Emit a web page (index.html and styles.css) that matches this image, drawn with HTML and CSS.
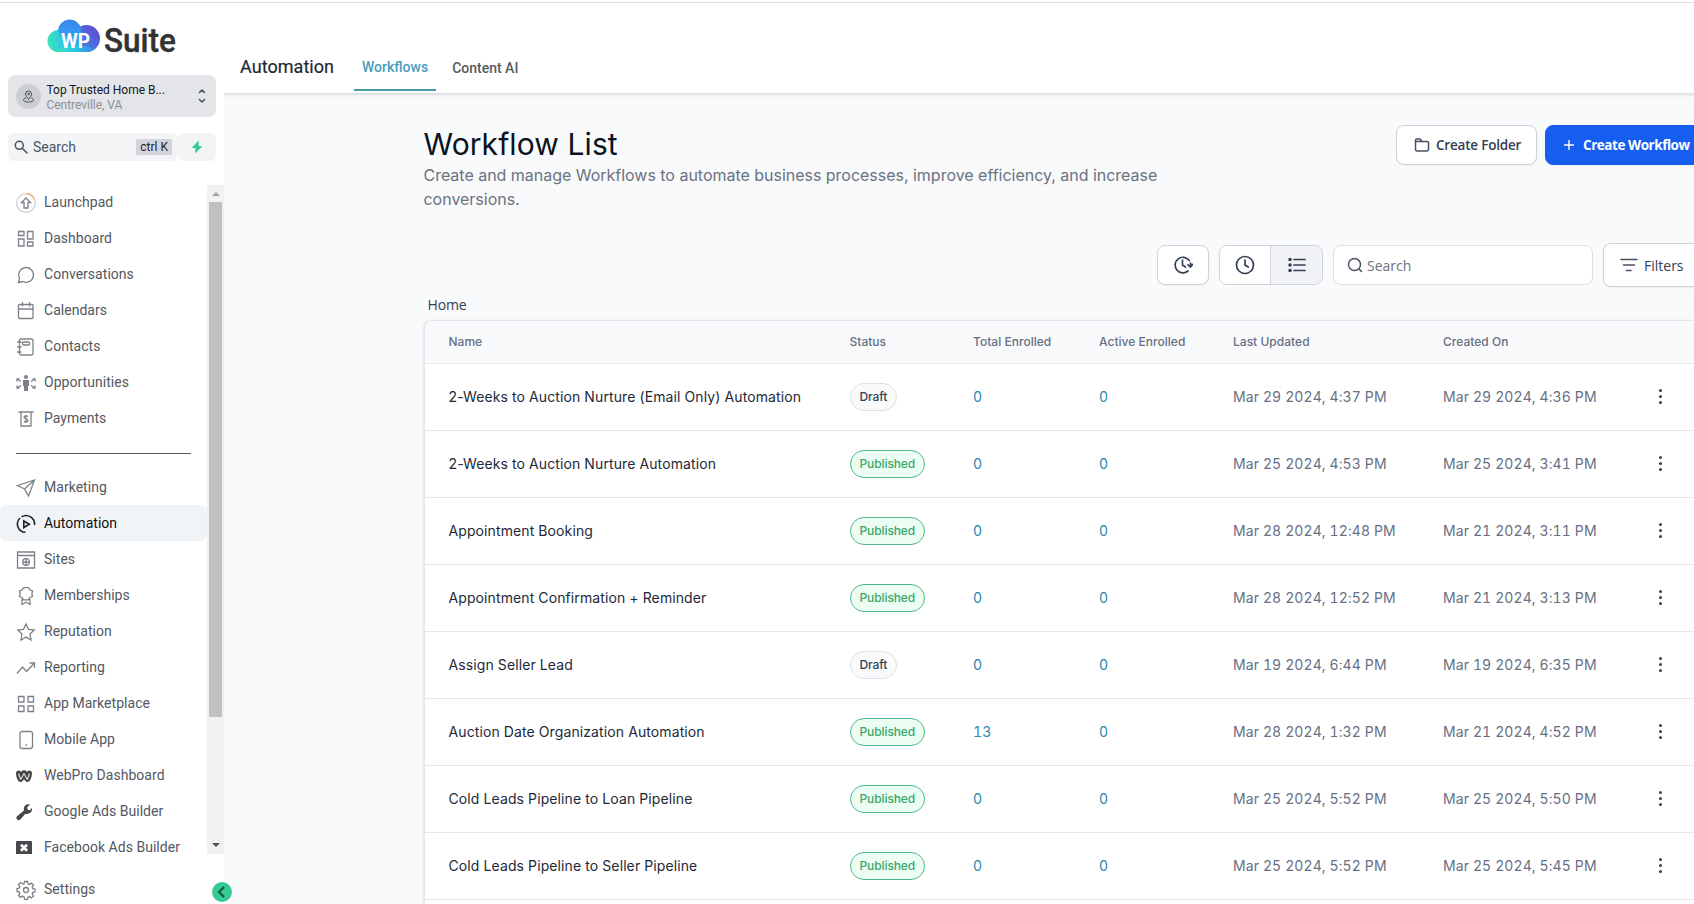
FILE: index.html
```html
<!DOCTYPE html>
<html lang="en">
<head>
<meta charset="utf-8">
<title>Automation - Workflows</title>
<link rel="stylesheet" href="styles.css">
</head>
<body>
<div class="app">
  <aside class="sidebar">
    <div class="logo">
      <svg width="150" height="50" viewBox="0 0 150 50">
        <defs>
          <linearGradient id="g1" x1="0" y1="0" x2="1" y2="0"><stop offset="0" stop-color="#3be6b4"/><stop offset=".5" stop-color="#2cc6e6"/><stop offset="1" stop-color="#3f7fe6"/></linearGradient>
          <linearGradient id="g2" x1="0" y1="0" x2="0" y2="1"><stop offset="0" stop-color="#3a86f0"/><stop offset="1" stop-color="#2cb8ea"/></linearGradient>
          <linearGradient id="g3" x1="1" y1="0" x2="0" y2="1"><stop offset="0" stop-color="#6a3fd0"/><stop offset="1" stop-color="#2f9bea"/></linearGradient>
        </defs>
        <path d="M11 35a11 11 0 1 1 5-21l16 21z" fill="url(#g1)"/>
        <circle cx="39.500" cy="21.500" r="13.500" fill="url(#g3)"/>
        <path d="M11 13a11.700 11.700 0 0 1 23-1.500c2 8 0 18.500-5 23.500H22z" fill="url(#g2)"/>
        <path d="M11 35h28a13 13 0 0 0 10-4C36 29 20 27 8 34z" fill="url(#g1)"/>
        <text x="14" y="31" textLength="29" lengthAdjust="spacingAndGlyphs" class="logo-wp">WP</text>
        <text x="57" y="35" textLength="72" lengthAdjust="spacingAndGlyphs" class="logo-suite">Suite</text>
      </svg>
    </div>
    <div class="account">
      <span class="account-pin"><svg width="13" height="13" viewBox="0 0 13 13" class="ln"><path d="M6.500 9C4.500 7 3.500 5.500 3.500 4a3 3 0 0 1 6 0c0 1.500-1 3-3 5z"/><circle cx="6.500" cy="4" r=".8"/><path d="M3.500 8C0 9 .5 12 6.500 12s6.500-3 3-4"/></svg></span>
      <div class="account-text"><div class="account-name">Top Trusted Home B...</div><div class="account-city">Centreville, VA</div></div>
      <svg width="8" height="16" viewBox="0 0 8 16" class="ln chev"><path d="M1.500 4.500L4 2l2.500 2.500M1.500 11.500L4 14l2.500-2.500"/></svg>
    </div>
    <div class="search-row">
      <div class="side-search">
        <svg width="14" height="14" viewBox="0 0 14 14" class="ln bold"><circle cx="5.300" cy="5.300" r="4"/><path d="M8.300 8.300l4.700 4.700"/></svg>
        <span>Search</span><kbd>ctrl K</kbd>
      </div>
      <div class="bolt"><svg width="12" height="14" viewBox="0 0 12 14"><path d="M8 .5L.8 7.500l3.700.8L4 13.500 11.200 6.500 7.500 5.700z" fill="#37ca93"/></svg></div>
    </div>
    <div class="nav-wrap">
      <nav class="nav">
        <a class="item"><svg class="ico" viewBox="0 0 20 20"><circle cx="10" cy="10" r="9.300" stroke="#ccd3dc"/><path d="M10 .7a9.300 9.300 0 0 1 8.500 5.500" stroke="#f0b070"/><path d="M10 5L5.500 9.500H8V15h4V9.500h2.500z"/></svg>Launchpad</a>
        <a class="item"><svg class="ico" viewBox="0 0 20 20"><path d="M2.500 2.500h5.500v4H2.500zM11.500 2.500h5.500v7.500h-5.500zM2.500 10h5.500v7H2.500zM11.500 13h5.500v4h-5.500z"/></svg>Dashboard</a>
        <a class="item"><svg class="ico" viewBox="0 0 20 20"><path d="M2.500 17.500l1-4.200a7.400 7.400 0 1 1 3.200 3.200z"/></svg>Conversations</a>
        <a class="item"><svg class="ico" viewBox="0 0 20 20"><rect x="2.500" y="3.500" width="14.500" height="14" rx="1"/><path d="M2.500 8h15M6.500 1v4.500M13.500 1v4.500"/></svg>Calendars</a>
        <a class="item"><svg class="ico" viewBox="0 0 20 20"><rect x="3.500" y="2" width="13.500" height="16" rx="1.500"/><path d="M1 5h4.500M1 10h4.500M1 15h4.500"/><rect x="6.500" y="5" width="7" height="3" rx="1"/></svg>Contacts</a>
        <a class="item"><svg class="ico" viewBox="0 0 20 20"><g class="fill"><circle cx="10" cy="4" r="2"/><path d="M7 7h6v6h-1v5H8v-5H7z"/></g><path d="M5 8.500L2 6.500M5 12.500l-3 2M15 8.500l3-2M15 12.500l3 2M1 8.500V6h2.500M19 8.500V6h-2.500M1 12.500V15h2.500M19 12.500V15h-2.500"/></svg>Opportunities</a>
        <a class="item"><svg class="ico" viewBox="0 0 20 20"><path d="M2.500 3h15M5 3v14h10V3"/><path d="M12 7.500c-1-1-4-1-4 .8 0 2 4 1.200 4 3.200 0 1.800-3 1.800-4 .8M10 6v8"/></svg>Payments</a>
        <hr class="rule">
        <a class="item"><svg class="ico" viewBox="0 0 20 20"><path d="M1.500 7.500L18.500 2 12.500 18l-4-7zM8.500 11l10-9"/></svg>Marketing</a>
        <a class="item active"><svg class="ico" viewBox="0 0 20 20"><path d="M9.500 18.300A8.300 8.300 0 0 1 4 4M5.500 2.900A8.500 8.500 0 0 1 18.500 11"/><path d="M7.800 7v6.500l5.500-3.200z"/></svg>Automation</a>
        <a class="item"><svg class="ico" viewBox="0 0 20 20"><path d="M1.500 2h17v16h-17zM1.500 5.500h17"/><circle cx="10" cy="12" r="3.300"/><path d="M7 12h6M10 9v6"/></svg>Sites</a>
        <a class="item"><svg class="ico" viewBox="0 0 20 20"><path d="M7.500 1.700h5l1.300 2.100 2.700 1.200-.6 3 .6 2.500-2.700 1.200-1.300 2.200h-5l-1.300-2.200-2.700-1.200.6-2.500-.6-3 2.700-1.200zM6 13v5.500l4-2.300 4 2.300V13"/></svg>Memberships</a>
        <a class="item"><svg class="ico" viewBox="0 0 20 20"><path d="M10 2l2.500 5.400 5.700.7-4.200 4 1.100 5.900-5.100-2.900L4.900 18 6 12.100l-4.200-4 5.700-.7z"/></svg>Reputation</a>
        <a class="item"><svg class="ico" viewBox="0 0 20 20"><path d="M1 15.500L6.500 9l4 4.500L18.500 5M13.500 5h5v5"/></svg>Reporting</a>
        <a class="item"><svg class="ico" viewBox="0 0 20 20"><path d="M2.500 2.500h5.500v5.500H2.500zM12 2.500h5.500v5.500H12zM2.500 12h5.500v5.500H2.500zM12 12h5.500v5.500H12z"/></svg>App Marketplace</a>
        <a class="item"><svg class="ico" viewBox="0 0 20 20"><rect x="4" y="1.500" width="12.500" height="17" rx="2"/><path d="M9.500 15h1.500"/></svg>Mobile App</a>
        <a class="item"><svg class="ico dark" viewBox="0 0 20 20"><path class="fill" d="M0 7c0-3 4-3.500 5-1 1-2.500 5-2.500 6 0 1-2.500 5-2 5 1 0 3-1.500 9-4.500 9-1.500 0-2.500-1-3.500-3-1 2-2 3-3.500 3C1.500 16 0 10 0 7z"/><path d="M2.500 7.500l2.200 6L8 7.500l3.300 6 2.200-6" stroke="#fff" stroke-width="1"/></svg>WebPro Dashboard</a>
        <a class="item"><svg class="ico dark" viewBox="0 0 20 20"><path class="fill" d="M.8 14.500L8 8.500c-1-4 2-7 6-6L11.200 5.200l.5 2.500 2.500.5 1.700-2.500c1 4-2.500 7-6.500 6L4 17.700c-2 1.500-4.700-1-3.200-3.200z"/></svg>Google Ads Builder</a>
        <a class="item"><svg class="ico dark" viewBox="0 0 20 20"><rect class="fill" x="0" y="3" width="16" height="13.500" rx="1"/><path d="M5 6.700l6 6M11 6.700l-6 6" stroke="#fff" stroke-width="2.800"/></svg>Facebook Ads Builder</a>
      </nav>
      <div class="scrollbar"><i class="up"></i><b class="thumb"></b><i class="down"></i></div>
    </div>
    <a class="item settings"><svg class="ico" viewBox="0 0 20 20"><path d="M8.500 1.500h3l.5 2.300 1.500.6 2-1.300 2 2-1.300 2 .6 1.500 2.200.5v2.800l-2.200.5-.6 1.500 1.300 2-2 2-2-1.300-1.500.6-.5 2.300h-3L8 16.700l-1.500-.6-2 1.300-2-2 1.300-2-.6-1.500L1 11.400V8.600l2.200-.5.600-1.500-1.300-2 2-2 2 1.300L8 3.800z"/><circle cx="10" cy="10" r="2.500"/></svg>Settings</a>
    <button class="collapse"><svg width="20" height="20" viewBox="0 0 20 20"><path d="M12 5l-5 5 5 5" fill="none" stroke="#14603f" stroke-width="2.400"/></svg></button>
  </aside>
  <main class="main">
    <header class="topbar">
      <h1>Automation</h1>
      <a class="tab on">Workflows</a>
      <a class="tab">Content AI</a>
    </header>
    <section class="content">
      <div class="head">
        <div class="head-text"><h2>Workflow List</h2><p>Create and manage Workflows to automate business processes, improve efficiency, and increase conversions.</p></div>
        <div class="head-actions">
          <button class="btn folder"><svg width="16" height="16" viewBox="0 0 16 16" class="ln bold"><path d="M1.500 3.500a1.500 1.500 0 0 1 1.500-1.500h3l2 2.500h5A1.500 1.500 0 0 1 14.500 6v6.500A1.500 1.500 0 0 1 13 14H3a1.500 1.500 0 0 1-1.500-1.500zM1.500 4.500h6"/></svg><span>Create Folder</span></button>
          <button class="btn primary"><svg width="12" height="12" viewBox="0 0 12 12"><path d="M6 1v10M1 6h10" stroke="#fff" stroke-width="1.400"/></svg><span>Create Workflow</span></button>
        </div>
      </div>
      <div class="tools">
        <button class="btn square"><svg width="20" height="20" viewBox="0 0 20 20" class="ln tool"><path d="M16.300 5.500A7.800 7.800 0 1 0 15 16M17.500 12c.3-1.300.3-2.600 0-4M9.500 5v5l3 2M15 9.800l2.500 2.200 2-2.500"/></svg></button>
        <div class="group"><button><svg width="20" height="20" viewBox="0 0 20 20" class="ln tool"><circle cx="10" cy="10" r="8.500"/><path d="M10 5v5l3.300 2"/></svg></button><button class="sel"><svg width="20" height="20" viewBox="0 0 20 20" class="ln tool"><path d="M7 4.500h11M7 10h11M7 15.500h11"/><path d="M3 4.500h.01M3 10h.01M3 15.500h.01" stroke-width="3.600"/></svg></button></div>
        <div class="search"><svg width="16" height="16" viewBox="0 0 16 16" class="ln bold"><circle cx="7.500" cy="7.500" r="6"/><path d="M12 12l2.500 2.500"/></svg><span>Search</span></div>
        <button class="btn filters"><svg width="18" height="14" viewBox="0 0 18 14" class="ln bold"><path d="M1 1.500h16M3.500 7h11M6.500 12.500h4.500"/></svg><span>Filters</span></button>
      </div>
      <div class="crumb">Home</div>
      <div class="table">
        <div class="row th"><span>Name</span><span>Status</span><span>Total Enrolled</span><span>Active Enrolled</span><span>Last Updated</span><span>Created On</span><span></span></div>
        <div class="row"><span class="name">2-Weeks to Auction Nurture (Email Only) Automation</span><span><em class="badge">Draft</em></span><span class="num">0</span><span class="num">0</span><span>Mar 29 2024, 4:37 PM</span><span>Mar 29 2024, 4:36 PM</span><span class="dots"><i></i><i></i><i></i></span></div>
        <div class="row"><span class="name">2-Weeks to Auction Nurture Automation</span><span><em class="badge pub">Published</em></span><span class="num">0</span><span class="num">0</span><span>Mar 25 2024, 4:53 PM</span><span>Mar 25 2024, 3:41 PM</span><span class="dots"><i></i><i></i><i></i></span></div>
        <div class="row"><span class="name">Appointment Booking</span><span><em class="badge pub">Published</em></span><span class="num">0</span><span class="num">0</span><span>Mar 28 2024, 12:48 PM</span><span>Mar 21 2024, 3:11 PM</span><span class="dots"><i></i><i></i><i></i></span></div>
        <div class="row"><span class="name">Appointment Confirmation + Reminder</span><span><em class="badge pub">Published</em></span><span class="num">0</span><span class="num">0</span><span>Mar 28 2024, 12:52 PM</span><span>Mar 21 2024, 3:13 PM</span><span class="dots"><i></i><i></i><i></i></span></div>
        <div class="row"><span class="name">Assign Seller Lead</span><span><em class="badge">Draft</em></span><span class="num">0</span><span class="num">0</span><span>Mar 19 2024, 6:44 PM</span><span>Mar 19 2024, 6:35 PM</span><span class="dots"><i></i><i></i><i></i></span></div>
        <div class="row"><span class="name">Auction Date Organization Automation</span><span><em class="badge pub">Published</em></span><span class="num">13</span><span class="num">0</span><span>Mar 28 2024, 1:32 PM</span><span>Mar 21 2024, 4:52 PM</span><span class="dots"><i></i><i></i><i></i></span></div>
        <div class="row"><span class="name">Cold Leads Pipeline to Loan Pipeline</span><span><em class="badge pub">Published</em></span><span class="num">0</span><span class="num">0</span><span>Mar 25 2024, 5:52 PM</span><span>Mar 25 2024, 5:50 PM</span><span class="dots"><i></i><i></i><i></i></span></div>
        <div class="row"><span class="name">Cold Leads Pipeline to Seller Pipeline</span><span><em class="badge pub">Published</em></span><span class="num">0</span><span class="num">0</span><span>Mar 25 2024, 5:52 PM</span><span>Mar 25 2024, 5:45 PM</span><span class="dots"><i></i><i></i><i></i></span></div>
        <div class="row"></div>
      </div>
    </section>
  </main>
</div>
</body>
</html>
```
FILE: styles.css
```css
* { box-sizing: border-box; }
body { margin: 0; font-family: Roboto, sans-serif; color: #344054; background: #fff; overflow: hidden; }
button { font: inherit; color: inherit; padding: 0; margin: 0; }
svg { flex: none; display: block; }
.app { display: flex; height: 904px; padding-top: 3px; overflow: hidden; background: linear-gradient(#fff 2px, #dcdcdc 2px, #dcdcdc 3px, #fff 3px); }
.ln { fill: none; stroke: #475060; stroke-width: 1; stroke-linecap: round; stroke-linejoin: round; }
.ln.bold { stroke-width: 1.500; }
.ln.tool { stroke: #344054; stroke-width: 1.700; }

/* Sidebar */
.sidebar { position: relative; width: 224px; flex: none; display: flex; flex-direction: column; background: #fff; }
.sidebar > * { flex: none; }
.logo { height: 72px; padding: 14px 0 0 47px; }
.logo svg { overflow: visible; }
.logo-wp { font: 700 20px Roboto, sans-serif; fill: #fff; }
.logo-suite { font: 500 33px Roboto, sans-serif; fill: #333; stroke: #333; stroke-width: .4px; }
.account { display: flex; align-items: center; margin-left: 8px; width: 208px; height: 42px; border-radius: 7px; background: #e4e5e9; padding: 0 10px 0 8px; }
.account-pin { width: 25px; height: 25px; border-radius: 50%; background: #cdced3; display: grid; place-items: center; margin-right: 5.500px; }
.account-text { flex: 1; line-height: 15px; padding-top: 3px; }
.account-name { font-size: 12px; color: #111827; letter-spacing: -.02px; }
.account-city { font-size: 12px; color: #8b8f98; letter-spacing: -.04px; }
.chev { stroke-width: 1.500; }
.search-row { display: flex; margin: 16px 0 0 8px; height: 28px; width: 208px; }
.side-search { display: flex; align-items: center; width: 170px; flex: none; padding: 0 6px 0 6px; background: #f2f4f6; border-radius: 6px; font-size: 14px; color: #4b5563; }
.side-search span { margin-left: 5px; flex: 1; margin-top: -1px; }
kbd { font: 12px/16px Roboto, sans-serif; background: #d3d4db; color: #22252c; padding: 0 4px; border-radius: 1px; }
.bolt { flex: 1; background: #f2f4f6; border-radius: 6px; display: grid; place-items: center; }
.nav-wrap { display: flex; margin-top: 24px; height: 669px; overflow: hidden; }
.nav { width: 207px; flex: none; overflow: hidden; }
.item { display: flex; align-items: center; height: 36px; padding-left: 16px; font-size: 14px; color: #54585f; white-space: nowrap; letter-spacing: .03px; }
.nav .item:first-child { margin-top: -1px; }
.ico { width: 20px; height: 20px; margin-right: 8px; fill: none; stroke: #7d8187; stroke-width: 1.300; margin-top: 2px; }
.ico .fill { fill: #7d8187; stroke: none; }
.ico.dark { stroke: #45474b; }
.ico.dark .fill { fill: #45474b; }
.active { background: #f1f4f6; color: #111; border-radius: 6px; }
.active .ico { stroke: #1f2328; stroke-width: 1.600; }
.rule { border: 0; height: 1px; background: #55585c; width: 175px; margin: 17px 0 15px 16px; }
.scrollbar { width: 17px; background: #f1f1f1; display: flex; flex-direction: column; align-items: center; }
.scrollbar .thumb { width: 13px; height: 515px; background: #c1c1c1; }
.up { border: 4px solid transparent; border-top: 0; border-bottom-color: #a3a3a3; margin: 7px 0 6px; }
.down { border: 4px solid transparent; border-bottom: 0; border-top-color: #505050; margin: auto 0 7px; }
.settings { margin-top: 17px; }
.collapse { position: absolute; left: 212px; top: 879px; width: 20px; height: 20px; border: 0; border-radius: 50%; background: #37ca93; z-index: 2; }

/* Main */
.main { flex: 1; min-width: 0; background: #f8fafb; overflow: hidden; }
.topbar { display: flex; align-items: flex-end; height: 91px; background: #fff; padding-left: 16px; border-bottom: 1px solid #dfe1e4; box-shadow: 0 1px 3px rgba(0,0,0,.12); }
.topbar h1 { margin: 0 20px 14px 0; font-weight: 400; font-size: 18px; line-height: 24px; color: #1f2937; letter-spacing: .05px; width: 94px; -webkit-text-stroke: .2px; }
.tab { font-size: 14px; font-weight: 500; color: #565b63; line-height: 20px; padding: 2px 8px 0; margin: 0 8px 2px 0; border-bottom: 2px solid transparent; height: 35px; }
.tab.on { color: #4a9cc0; border-color: #4c9aa8; padding-top: 1px; }
.content { width: 1500px; padding: 31px 0 0 200px; font-family: Inter, sans-serif; }
.head { display: flex; height: 120px; }
.head-text { width: 740px; margin: 0 232.500px 0 -.5px; flex: none; }
h2 { margin: 0; font-weight: 400; font-size: 30px; line-height: 38px; color: #0b1220; letter-spacing: .1px; }
.head p { margin: 0; font-size: 16px; line-height: 24px; color: #6b7280; letter-spacing: -.02px; }
.head-actions { display: flex; gap: 8px; flex: none; }
.btn { display: flex; align-items: center; border: 1px solid #cdd2db; background: #fff; border-radius: 8px; height: 40px; box-shadow: 0 1px 2px rgba(16,24,40,.05); white-space: nowrap; font-family: "Open Sans", sans-serif; font-size: 14px; }
.folder { width: 141px; padding-left: 17px; gap: 6px; font-weight: 600; font-size: 13.500px; letter-spacing: -.2px; }
.primary { width: 180px; padding-left: 17px; gap: 8px; font-weight: 700; font-size: 13.500px; letter-spacing: -.45px; background: #155eef; border-color: #155eef; color: #fff; }
.tools { display: flex; align-items: center; height: 44px; margin: -2px 0 0 733px; }
.square { width: 52px; justify-content: center; margin-right: 10px; }
.group { display: flex; width: 104px; height: 40px; border: 1px solid #cdd2db; border-radius: 8px; overflow: hidden; margin-right: 10px; }
.group button { width: 50px; border: 0; background: #fff; display: grid; place-items: center; }
.group .sel { width: 52px; background: #f1f2f6; border-left: 1px solid #cdd2db; }
.search { display: flex; align-items: center; width: 260px; height: 40px; border: 1px solid #dcdfe5; border-radius: 8px; background: #fff; padding-left: 13px; gap: 4px; font: 14px "Open Sans", sans-serif; color: #6b7280; margin-right: 10px; }
.filters { width: 120px; height: 44px; padding-left: 16px; gap: 6px; }
.crumb { font: 14px/20px "Open Sans", sans-serif; letter-spacing: -.15px; margin: 8px 0 5px 3.500px; color: #344054; }
.table { border: 1px solid #e3e6ea; border-radius: 8px 0 0 0; background: #fff; box-shadow: -1px 0 2px rgba(16,24,40,.08); overflow: hidden; }
.row { display: grid; grid-template-columns: 401px 123.500px 126px 134px 210px 211.500px 12px; align-items: center; height: 67px; padding: 0 0 1px 23.500px; border-bottom: 1px solid #e6e8ec; font-size: 14px; color: #667085; white-space: nowrap; font-variant-numeric: tabular-nums; letter-spacing: .1px; }
.th { height: 43px; background: #f9fafb; font-size: 12px; font-weight: 500; letter-spacing: .02px; }
.name { color: #1d2939; letter-spacing: .1px; font-variant-numeric: normal; }
.num { color: #2a86ad; }
.badge { display: inline-block; font: 500 12px/26px Inter, sans-serif; letter-spacing: -.1px; border: 1px solid #dfe0e8; border-radius: 14px; padding: 0 9px; color: #344054; background: #f9fafb; vertical-align: middle; }
.badge.pub { color: #3aa76a; border-color: #4fb98a; background: #ecfdf3; }
.dots { display: grid; gap: 3px; justify-items: center; }
.dots i { width: 3px; height: 3px; border-radius: 50%; background: #344054; }
```
